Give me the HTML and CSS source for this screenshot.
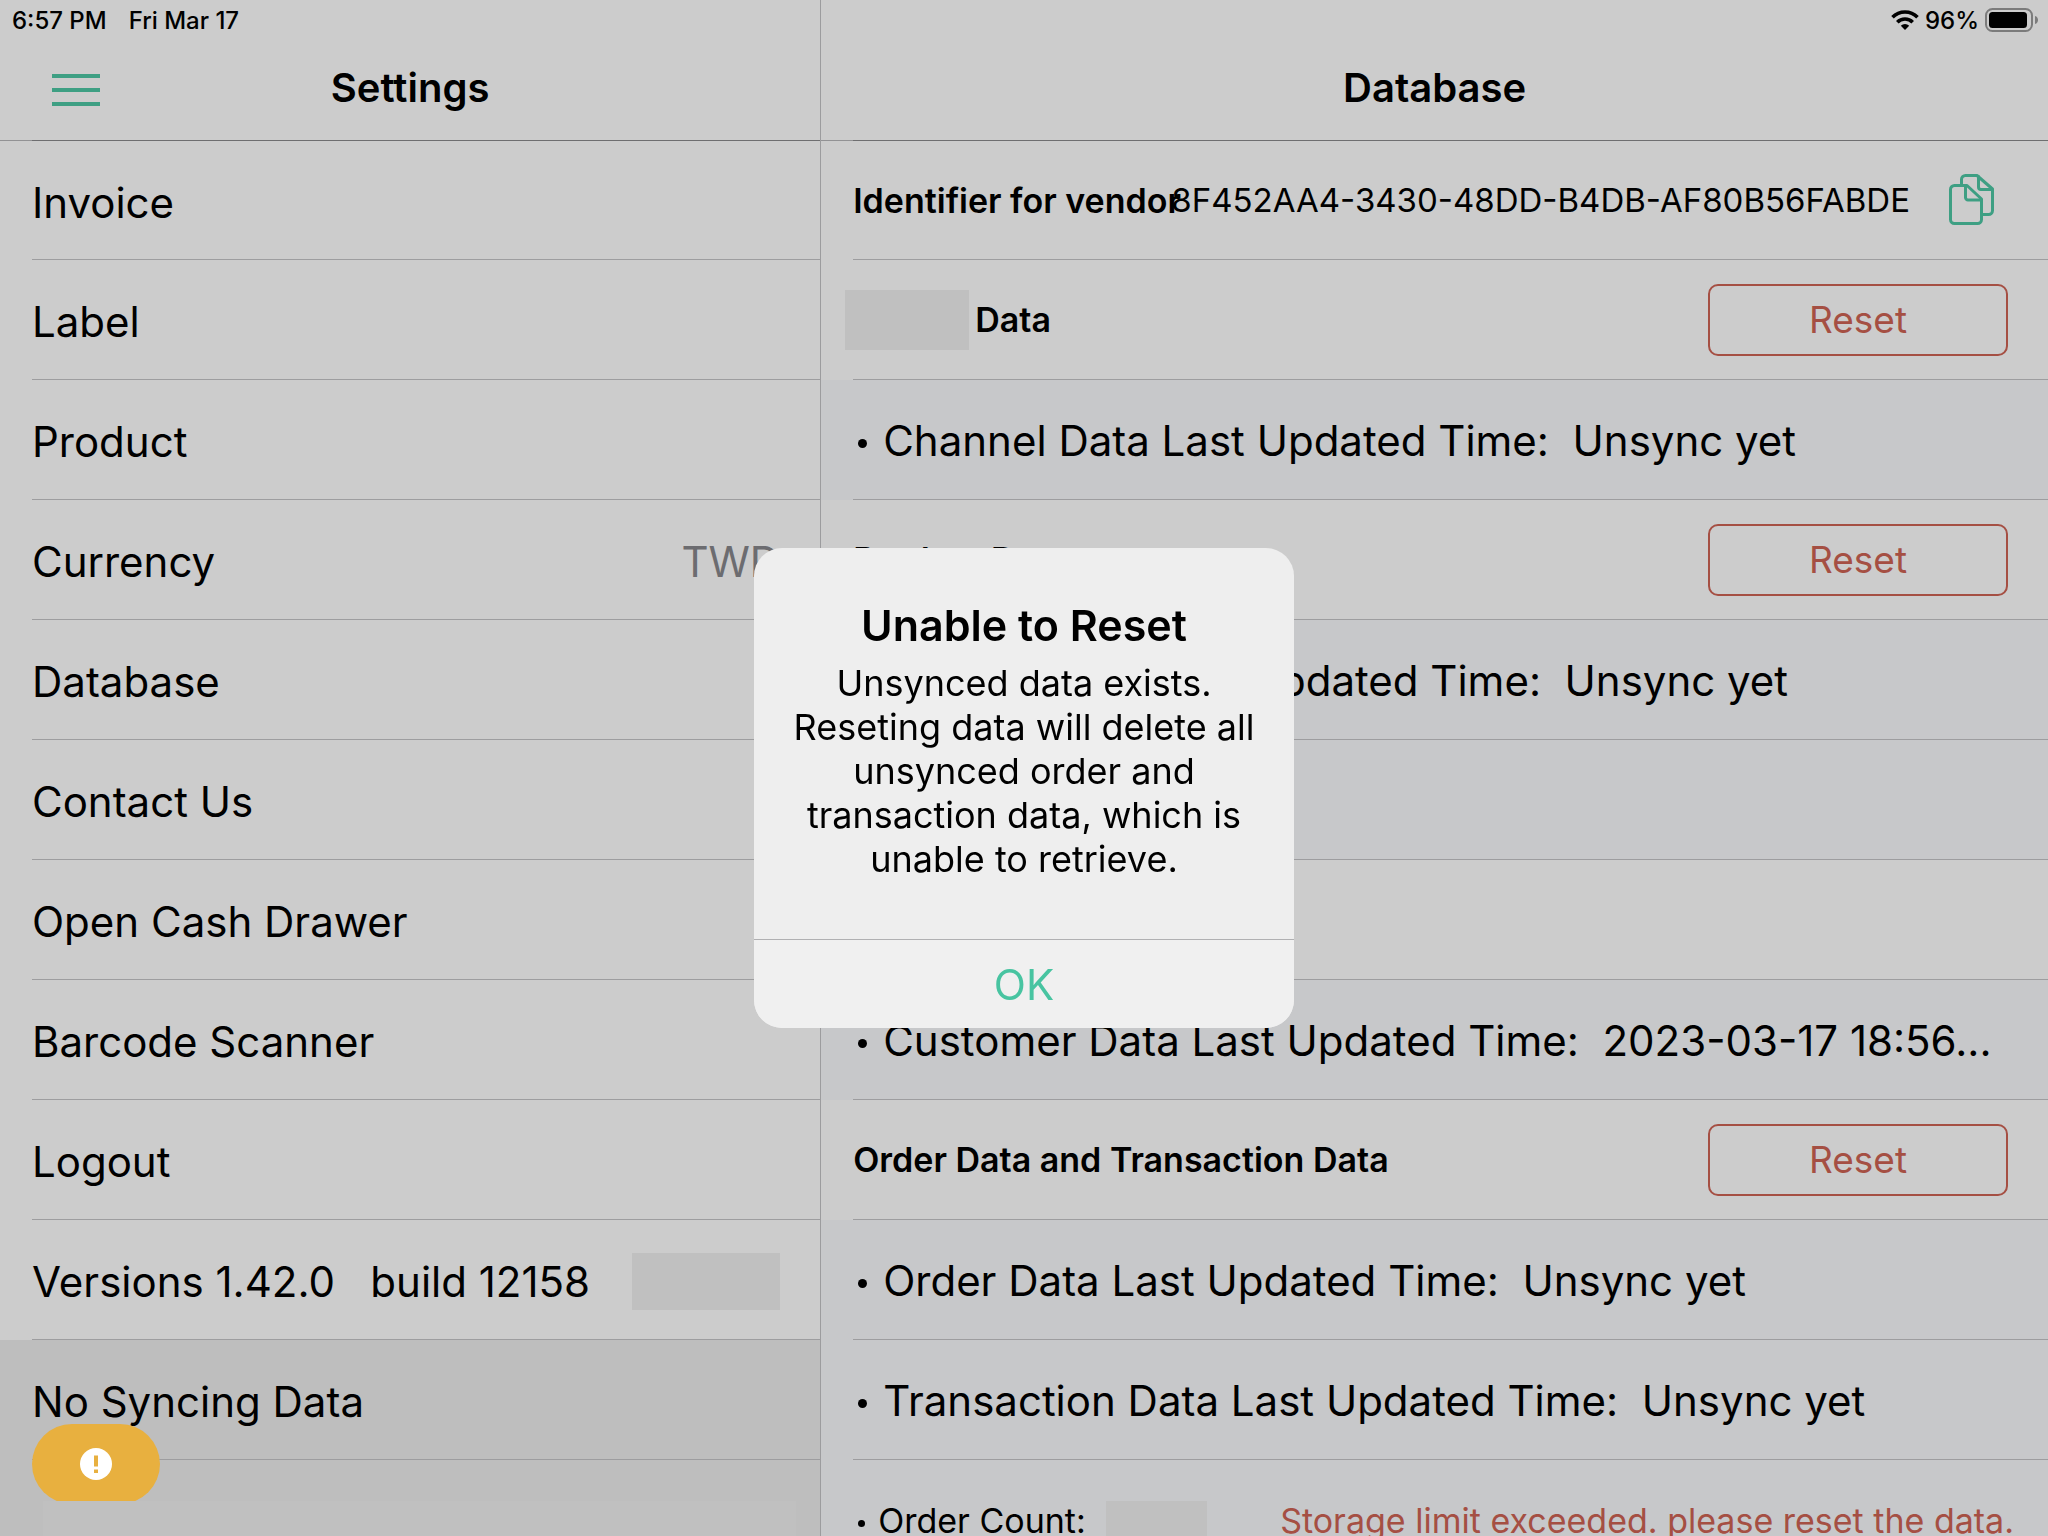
FILE: index.html
```html
<!doctype html>
<html lang="en">
<head>
    <meta charset="UTF-8">
    <meta name="viewport" content="width=device-width, initial-scale=1.0">
    <title>Settings</title>
    <link rel="stylesheet" href="styles.css">
</head>
<body>

<div class="app">
    <section class="pane pane-menu">
        <div class="status">
            <span>6:57 PM</span>
            <span>Fri Mar 17</span>
        </div>
        <header class="nav">
            <button class="menu-btn" aria-label="Menu">
                <svg width="48" height="32" viewBox="0 0 48 32"><path d="M0 2h48M0 16h48M0 30h48" stroke="currentColor" stroke-width="4"/></svg>
            </button>
            <h1 class="nav-title">Settings</h1>
        </header>

        <ul class="list">
            <li class="row"><div class="row-inner">Invoice</div></li>
            <li class="row"><div class="row-inner">Label</div></li>
            <li class="row"><div class="row-inner">Product</div></li>
            <li class="row"><div class="row-inner">Currency <span class="value">TWD</span></div></li>
            <li class="row"><div class="row-inner">Database</div></li>
            <li class="row"><div class="row-inner">Contact Us</div></li>
            <li class="row"><div class="row-inner">Open Cash Drawer</div></li>
            <li class="row"><div class="row-inner">Barcode Scanner</div></li>
            <li class="row"><div class="row-inner">Logout</div></li>
            <li class="row"><div class="row-inner"><span class="version">Versions 1.42.0   build 12158</span> <span class="mask mask-version"></span></div></li>
            <li class="row row-dark"><div class="row-inner">No Syncing Data</div></li>
        </ul>

        <div class="menu-bottom">
            <button class="warn-btn" aria-label="Warning">
                <svg width="32" height="32" viewBox="0 0 32 32">
                    <circle cx="16" cy="16" r="16" fill="#fff"/>
                    <path d="M14 7.500h4v11h-4zM14 21.500h4v3.500h-4z" fill="#e8b03f"/>
                </svg>
            </button>
            <div class="mask mask-bottom"></div>
        </div>
    </section>

    <section class="pane pane-detail">
        <div class="status status-right">
            <svg class="wifi" width="28" height="20" viewBox="0 0 28 20">
                <g fill="none" stroke="#000" stroke-width="3.600">
                    <path d="M1.500 7.300a17.500 17.500 0 0 1 25 0"/>
                    <path d="M6.300 12.200a10.800 10.800 0 0 1 15.400 0"/>
                </g>
                <path d="M14 20l-4.200-4.300a6 6 0 0 1 8.400 0z"/>
            </svg>
            <span>96%</span>
            <svg width="54" height="24" viewBox="0 0 54 24">
                <rect x="1" y="1" width="46" height="22" rx="6.500" fill="none" stroke="#7b7b7b" stroke-width="2"/>
                <rect x="4" y="4" width="38" height="16" rx="3.500"/>
                <path d="M50 8c4 1 4 7 0 8z" fill="#7b7b7b"/>
            </svg>
        </div>
        <header class="nav">
            <h2 class="nav-title">Database</h2>
        </header>

        <ul class="list">
            <li class="row">
                <div class="row-inner">
                    <span class="label">Identifier for vendor</span>
                    <span class="uuid">8F452AA4-3430-48DD-B4DB-AF80B56FABDE</span>
                    <button class="copy-btn" aria-label="Copy">
                        <svg width="46" height="52" viewBox="0 0 46 52" fill="none" stroke="currentColor" stroke-width="3" stroke-linejoin="round">
                            <path d="M5.500 11.500H18L32.500 25v20.500a4 4 0 0 1-4 4h-23a4 4 0 0 1-4-4v-30a4 4 0 0 1 4-4z"/>
                            <path d="M16.500 11.500v12a2.500 2.500 0 0 0 2.500 2.500h13.500"/>
                            <path d="M12.500 11.500v-6a4 4 0 0 1 4-4H28L43.500 15v21.500a4 4 0 0 1-4 4H33"/>
                            <path d="M29.500 1.500V13a2.500 2.500 0 0 0 2.500 2.500h11.500"/>
                        </svg>
                    </button>
                </div>
            </li>
            <li class="row">
                <div class="row-inner">
                    <span class="label"><span class="mask mask-label"></span>Data</span>
                    <button class="reset-btn">Reset</button>
                </div>
            </li>
            <li class="row row-sub"><div class="row-inner"><span class="item">Channel Data Last Updated Time:  Unsync yet</span></div></li>
            <li class="row">
                <div class="row-inner">
                    <span class="label">Product Data</span>
                    <button class="reset-btn">Reset</button>
                </div>
            </li>
            <li class="row row-sub"><div class="row-inner"><span class="item">Product Data Last Updated Time:  Unsync yet</span></div></li>
            <li class="row row-sub"><div class="row-inner"></div></li>
            <li class="row"><div class="row-inner"></div></li>
            <li class="row row-sub"><div class="row-inner"><span class="item">Customer Data Last Updated Time:  2023-03-17 18:56...</span></div></li>
            <li class="row">
                <div class="row-inner">
                    <span class="label">Order Data and Transaction Data</span>
                    <button class="reset-btn">Reset</button>
                </div>
            </li>
            <li class="row row-sub"><div class="row-inner"><span class="item">Order Data Last Updated Time:  Unsync yet</span></div></li>
            <li class="row row-sub"><div class="row-inner"><span class="item">Transaction Data Last Updated Time:  Unsync yet</span></div></li>
            <li class="row row-sub">
                <div class="row-inner">
                    <span class="item item-small">Order Count:</span>
                    <span class="mask mask-count"></span>
                    <span class="error">Storage limit exceeded. please reset the data.</span>
                </div>
            </li>
        </ul>
    </section>
</div>

<div class="overlay">
    <div class="alert" role="alertdialog" aria-labelledby="alert-title" aria-describedby="alert-text">
        <div class="alert-body">
            <h3 class="alert-title" id="alert-title">Unable to Reset</h3>
            <p class="alert-text" id="alert-text">Unsynced data exists. Reseting data will delete all unsynced order and transaction data, which is unable to retrieve.</p>
        </div>
        <button class="alert-btn">OK</button>
    </div>
</div>

</body>
</html>
```
FILE: styles.css
```css
* {
    box-sizing: border-box;
}

body {
    margin: 0;
    font-family: Inter, "Liberation Sans", sans-serif;
    font-size: 42px;
    color: #000;
    background: #ccc;
    overflow: hidden;
}

button {
    padding: 0;
    border: none;
    background: transparent;
    font-family: inherit;
    cursor: pointer;
}

svg {
    display: block;
}

.app {
    display: flex;
    height: 100vh;
    overflow: hidden;
}

.pane {
    display: flex;
    flex-direction: column;
    min-width: 0;
}

.pane-menu {
    flex: 0 0 calc(40% + 1px);
}

.pane-detail {
    flex: 1;
    border-left: 1px solid #9c9c9e;
}

/* status bar */
.status {
    display: flex;
    flex-shrink: 0;
    align-items: center;
    gap: 22px;
    height: 40px;
    padding: 0 12px;
    font-size: 24px;
    font-weight: 500;
}

.status-right {
    justify-content: flex-end;
    gap: 6px;
    padding-right: 9px;
}

/* navigation bar */
.nav {
    display: grid;
    grid-template-columns: 1fr auto 1fr;
    flex-shrink: 0;
    align-items: center;
    height: 100px;
    padding: 0 52px;
    box-shadow: 0 1px 0 #929294;
}

.nav-title {
    grid-column: 2;
    margin: 0;
    padding-bottom: 4px;
    font-size: 40px;
    font-weight: 600;
    line-height: 48px;
}

.menu-btn {
    justify-self: start;
    color: #3e9f83;
}

/* lists */
.list {
    flex-shrink: 0;
    margin: 0;
    padding: 0;
    list-style: none;
}

.row {
    padding-left: 32px;
}

.row-inner {
    display: flex;
    align-items: center;
    justify-content: space-between;
    height: 120px;
    padding: 4px 40px 0 0;
    border-bottom: 1px solid #9d9d9f;
    white-space: pre;
}

.row:first-child .row-inner {
    border-top: 1px solid #6e6e70;
}

.row-dark {
    background: #bebebe;
}

.row-sub {
    background: #c7c8ca;
}

.pane-detail .row-inner {
    padding-top: 0;
}

.pane-detail .row-sub .row-inner {
    padding-top: 2px;
}

.value {
    color: #6c6c70;
}

.label {
    display: flex;
    align-items: center;
    gap: 6px;
    min-width: 0;
    font-size: 34px;
    font-weight: 600;
}

.uuid {
    margin-right: 26px;
    font-size: 33px;
}

.item {
    display: flex;
    align-items: center;
    gap: 16px;
    padding-left: 5px;
}

.item::before {
    content: "";
    width: 9px;
    height: 9px;
    margin-top: 6px;
    border-radius: 50%;
    background: #000;
}

.item-small {
    gap: 13px;
    font-size: 34px;
}

.item-small::before {
    width: 7px;
    height: 7px;
}

.error {
    flex: 1;
    text-align: right;
    font-size: 34px;
    color: #a54f43;
}

.pane-detail .row:last-child .row-inner {
    padding-right: 34px;
}

/* hidden values */
.mask {
    background: #c0c0c0;
}

.mask-version {
    width: 148px;
    height: 57px;
}

.mask-label {
    width: 124px;
    height: 60px;
    margin-left: -8px;
}

.mask-count {
    width: 101px;
    height: 40px;
    margin-left: 20px;
}

/* buttons */
.copy-btn {
    display: flex;
    flex-shrink: 0;
    justify-content: center;
    width: 72px;
    color: #3e9f83;
}

.reset-btn {
    width: 300px;
    height: 72px;
    border: 2px solid #a54f43;
    border-radius: 10px;
    font-size: 37px;
    color: #a54f43;
}

.menu-bottom {
    position: relative;
    display: flex;
    flex: 1;
    padding: 41px 24px 0 43px;
    background: #bebebe;
}

.mask-bottom {
    position: relative;
    flex: 1;
}

.warn-btn {
    position: absolute;
    top: -36px;
    left: 32px;
    display: flex;
    align-items: center;
    justify-content: center;
    width: 128px;
    height: 80px;
    border-radius: 40px;
    background: #e8b03f;
}

/* alert */
.overlay {
    position: fixed;
    inset: 40px 0 0;
    display: flex;
    align-items: center;
    justify-content: center;
}

.alert {
    width: 540px;
    border-radius: 28px;
    background: #eee;
    overflow: hidden;
}

.alert-body {
    padding: 50px 32px 58px;
    text-align: center;
}

.alert-title {
    margin: 0 0 9px;
    font-size: 43px;
    font-weight: 600;
    line-height: 54px;
}

.alert-text {
    margin: 0;
    font-size: 36px;
    line-height: 44px;
}

.alert-btn {
    display: block;
    width: 100%;
    height: 89px;
    border-top: 1px solid #b0b0b2;
    background: #f0f0f0;
    font-size: 42px;
    color: #48c4a1;
}
```
